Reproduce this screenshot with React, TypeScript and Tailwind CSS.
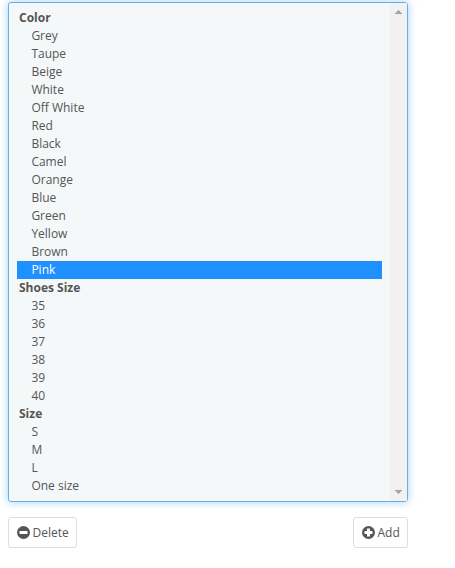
const groups: { label: string; items: string[] }[] = [
  { label: "Color", items: ["Grey", "Taupe", "Beige", "White", "Off White", "Red", "Black", "Camel", "Orange", "Blue", "Green", "Yellow", "Brown", "Pink"] },
  { label: "Shoes Size", items: ["35", "36", "37", "38", "39", "40"] },
  { label: "Size", items: ["S", "M", "L", "One size"] },
];

function Circle({ plus }: { plus?: boolean }) {
  return (
    <svg width="13" height="13" viewBox="0 0 13 13" className="shrink-0">
      <circle cx="6.5" cy="6.5" r="6.5" fill="#555" />
      <rect x="2.5" y="5" width="8" height="3" fill="#fff" />
      {plus && <rect x="5" y="2.5" width="3" height="8" fill="#fff" />}
    </svg>
  );
}

export default function App() {
  return (
    <div className="w-[455px] h-[568px] bg-white pt-[2px] pl-2 font-['Open_Sans',sans-serif] text-[12px] text-[#555]">
      <div className="w-[400px] h-[500px] flex rounded-[3px] border border-[#66afe9] bg-[#f5f8f9] shadow-[0_0_8px_rgba(102,175,233,0.6)]">
        <div className="flex-1 pl-2 pr-2 pt-[6px]">
          {groups.map((g) => (
            <div key={g.label}>
              <div className="h-[18px] leading-[18px] pl-[2px] font-bold">{g.label}</div>
              {g.items.map((it) => (
                <div
                  key={it}
                  className={
                    it === "Pink"
                      ? "h-[18px] leading-[18px] pl-[14.4px] bg-[#1e90ff] text-white"
                      : "h-[18px] leading-[18px] pl-[14.4px]"
                  }
                >
                  {it}
                </div>
              ))}
            </div>
          ))}
        </div>
        <div className="w-[17px] bg-[#f1f1f1] flex flex-col justify-between items-center py-[7px]">
          <svg width="7" height="4" viewBox="0 0 7 4"><path d="M3 0h1v1h1v1h1v1h1v1H0V3h1V2h1V1h1z" fill="#a3a3a3" /></svg>
          <svg width="7" height="4" viewBox="0 0 7 4"><path d="M0 0h7v1H6v1H5v1H4v1H3V3H2V2H1V1H0z" fill="#a3a3a3" /></svg>
        </div>
      </div>
      <div className="w-[400px] mt-[15px] flex justify-between">
        <button className="h-[31px] w-[69px] flex items-center pl-2 gap-[2.5px] rounded-[3px] border border-[#ddd] bg-white text-[#555]">
          <Circle />
          <span>Delete</span>
        </button>
        <button className="h-[31px] w-[55px] flex items-center pl-2 gap-[2.5px] rounded-[3px] border border-[#ddd] bg-white text-[#555]">
          <Circle plus />
          <span>Add</span>
        </button>
      </div>
    </div>
  );
}
